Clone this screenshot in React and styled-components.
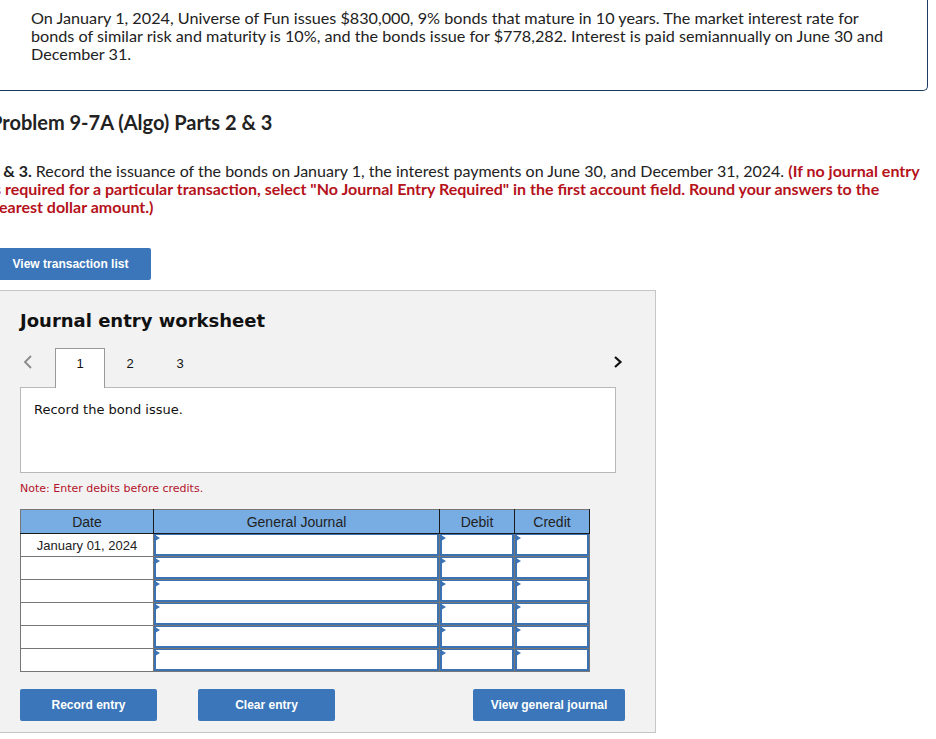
import React from 'react';
import styled, { createGlobalStyle } from 'styled-components';

const GlobalStyle = createGlobalStyle`
  html, body {
    margin: 0;
    padding: 0;
    background: #fff;
    overflow: hidden;
  }
`;

const Page = styled.div`
  width: 936px;
  height: 739px;
  overflow: hidden;
`;

const IntroCard = styled.section`
  margin-left: -20px;
  width: 948px;
  box-sizing: border-box;
  border: 1px solid #1d3a60;
  border-top: none;
  border-radius: 0 0 5px 5px;
  padding: 9px 36px 27px 50px;
  font-family: Lato, 'Open Sans', sans-serif;
  font-size: 16.2px;
  line-height: 18px;
  color: #222;
`;

const Content = styled.div`
  margin-left: -10px;
  width: 941px;
`;

const Heading = styled.h2`
  margin: 20px 0 0;
  font-family: Lato, sans-serif;
  font-size: 20px;
  line-height: 22px;
  font-weight: 700;
  color: #222;
`;

const Instruction = styled.p`
  margin: 29px 0 0;
  font-family: Lato, sans-serif;
  font-size: 16px;
  line-height: 18px;
  color: #222;

  strong {
    font-weight: 700;
  }
  .warn {
    color: #b5121b;
    font-weight: 700;
  }
`;

const Button = styled.button`
  display: inline-flex;
  align-items: center;
  justify-content: center;
  height: 32px;
  width: ${p => p.$w}px;
  padding: 0;
  border: none;
  border-radius: 2px;
  background: #3a76b9;
  color: #fff;
  font-family: 'Liberation Sans', Arial, sans-serif;
  font-weight: 700;
  font-size: 12px;
  cursor: pointer;
`;

const TopButtonRow = styled.div`
  margin-top: 32px;
`;

const Panel = styled.section`
  margin-top: 10px;
  width: 666px;
  height: 443px;
  box-sizing: border-box;
  background: #f2f2f2;
  border: 1px solid #c6c6c6;
  padding: 19px 0 0 29px;
`;

const PanelTitle = styled.h3`
  margin: 0;
  font-family: 'DejaVu Sans', Verdana, sans-serif;
  font-weight: 700;
  font-size: 18px;
  line-height: 22px;
  color: #111;
`;

const TabBar = styled.div`
  display: flex;
  align-items: flex-end;
  margin-top: 15px;
  width: 603px;
  height: 40px;
`;

const Arrow = styled.div`
  width: ${p => p.$w}px;
  height: 40px;
  display: flex;
  align-items: flex-start;
  padding-top: 7px;
  justify-content: ${p => (p.$right ? 'flex-end' : 'flex-start')};
  padding-left: ${p => (p.$right ? 0 : 3)}px;
  box-sizing: border-box;
  color: ${p => (p.$dim ? '#8a8a8a' : '#111')};
`;

const Tab = styled.div`
  width: 50px;
  height: 40px;
  box-sizing: border-box;
  display: flex;
  align-items: flex-start;
  justify-content: center;
  padding-top: 7px;
  font-family: 'Liberation Sans', Arial, sans-serif;
  font-size: 13px;
  color: #111;
  background: ${p => (p.$active ? '#fff' : 'transparent')};
  border: 1px solid ${p => (p.$active ? '#999' : 'transparent')};
  border-bottom: none;
  margin-bottom: -1px;
  position: relative;
  z-index: 1;
`;

const Spacer = styled.div`
  flex: 1;
`;

const Prompt = styled.div`
  width: 596px;
  height: 86px;
  box-sizing: border-box;
  background: #fff;
  border: 1px solid #b8b8b8;
  padding: 14px 13px;
  font-family: 'DejaVu Sans', Verdana, sans-serif;
  font-size: 13px;
  color: #111;
`;

const Note = styled.div`
  margin-top: 9px;
  font-family: 'DejaVu Sans', Verdana, sans-serif;
  font-size: 11px;
  color: #b3132b;
`;

const Table = styled.table`
  margin-top: 14px;
  border-collapse: collapse;
  table-layout: fixed;
  width: 570px;
  font-family: 'Liberation Sans', Arial, sans-serif;
  font-size: 13px;
  color: #222;
`;

const Th = styled.th`
  height: 23px;
  padding: 0;
  background: #78ade3;
  font-weight: 400;
  font-size: 14px;
  border: 1px solid #767676;
  border-bottom: 1px solid #1a1a1a;
  border-right: 1px solid #1a1a1a;
`;

const DateCell = styled.td`
  height: 22px;
  padding: 0;
  text-align: center;
  background: #fff;
  border: 1px solid #767676;
`;

const InputCell = styled.td`
  height: 22px;
  padding: 0;
  border: 1px solid #767676;
  background: #fff;
`;

const InputBox = styled.div`
  position: relative;
  height: 22px;
  box-sizing: border-box;
  border: 2px solid #3b72b4;
  border-top-width: 1px;

  &::before {
    content: '';
    position: absolute;
    left: -1px;
    top: 0;
    border-top: 3px solid transparent;
    border-bottom: 3px solid transparent;
    border-left: 5px solid #3b72b4;
  }
`;

const ActionRow = styled.div`
  display: flex;
  margin-top: 17px;
  width: 605px;
  gap: 41px;
`;

const Chevron = ({ dir }) => (
  <svg width="10" height="16" viewBox="0 0 10 16" fill="none">
    <path
      d={dir === 'left' ? 'M8 2 L2 8 L8 14' : 'M2 3 L7.5 8 L2 13'}
      stroke="currentColor"
      strokeWidth={dir === 'left' ? 1.8 : 2.2}
    />
  </svg>
);

const rows = ['January 01, 2024', '', '', '', '', ''];

export default function App() {
  return (
    <Page>
      <GlobalStyle />
      <IntroCard>
        On January 1, 2024, Universe of Fun issues $830,000, 9% bonds that mature in 10 years. The market interest rate for
        bonds of similar risk and maturity is 10%, and the bonds issue for $778,282. Interest is paid semiannually on June 30 and
        December 31.
      </IntroCard>
      <Content>
        <Heading>Problem 9-7A (Algo) Parts 2 &amp; 3</Heading>
        <Instruction>
          <strong>2 &amp; 3.</strong> Record the issuance of the bonds on January 1, the interest payments on June 30, and December 31, 2024.{' '}
          <span className="warn">
            (If no journal entry is required for a particular transaction, select "No Journal Entry Required" in the first account field. Round your answers to the nearest dollar amount.)
          </span>
        </Instruction>
        <TopButtonRow>
          <Button $w={161}>View transaction list</Button>
        </TopButtonRow>
        <Panel>
          <PanelTitle>Journal entry worksheet</PanelTitle>
          <TabBar>
            <Arrow $w={35} $dim><Chevron dir="left" /></Arrow>
            <Tab $active>1</Tab>
            <Tab>2</Tab>
            <Tab>3</Tab>
            <Spacer />
            <Arrow $w={30} $right><Chevron dir="right" /></Arrow>
          </TabBar>
          <Prompt>Record the bond issue.</Prompt>
          <Note>Note: Enter debits before credits.</Note>
          <Table>
            <colgroup>
              <col style={{ width: 133 }} />
              <col style={{ width: 286 }} />
              <col style={{ width: 75 }} />
              <col style={{ width: 75 }} />
            </colgroup>
            <thead>
              <tr>
                <Th>Date</Th>
                <Th>General Journal</Th>
                <Th>Debit</Th>
                <Th>Credit</Th>
              </tr>
            </thead>
            <tbody>
              {rows.map((d, i) => (
                <tr key={i}>
                  <DateCell>{d}</DateCell>
                  <InputCell><InputBox /></InputCell>
                  <InputCell><InputBox /></InputCell>
                  <InputCell><InputBox /></InputCell>
                </tr>
              ))}
            </tbody>
          </Table>
          <ActionRow>
            <Button $w={137}>Record entry</Button>
            <Button $w={137}>Clear entry</Button>
            <Spacer />
            <Button $w={152}>View general journal</Button>
          </ActionRow>
        </Panel>
      </Content>
    </Page>
  );
}
